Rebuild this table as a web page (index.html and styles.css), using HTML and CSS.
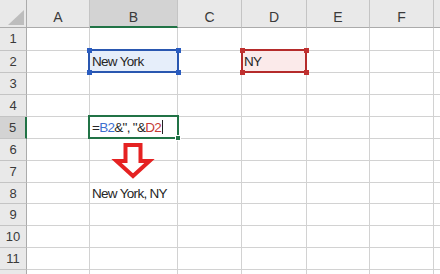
FILE: index.html
```html
<!DOCTYPE html>
<html>
<head>
<meta charset="utf-8">
<link rel="stylesheet" href="styles.css">
</head>
<body>
<div class="sheet">
  <div class="grid">
    <div class="corner"><span class="tri"></span></div>
    <div class="colhead">A</div>
    <div class="colhead active-col">B</div>
    <div class="colhead">C</div>
    <div class="colhead">D</div>
    <div class="colhead">E</div>
    <div class="colhead">F</div>
    <div class="colhead"></div>

    <div class="rowhead">1</div><div class="cell"></div><div class="cell"></div><div class="cell"></div><div class="cell"></div><div class="cell"></div><div class="cell"></div><div class="cell"></div>
    <div class="rowhead">2</div><div class="cell"></div><div class="cell fill-blue">New York</div><div class="cell"></div><div class="cell fill-red">NY</div><div class="cell"></div><div class="cell"></div><div class="cell"></div>
    <div class="rowhead">3</div><div class="cell"></div><div class="cell"></div><div class="cell"></div><div class="cell"></div><div class="cell"></div><div class="cell"></div><div class="cell"></div>
    <div class="rowhead">4</div><div class="cell"></div><div class="cell"></div><div class="cell"></div><div class="cell"></div><div class="cell"></div><div class="cell"></div><div class="cell"></div>
    <div class="rowhead active-row">5</div><div class="cell"></div><div class="cell formula">=<span class="ref-blue">B2</span>&amp;", "&amp;<span class="ref-red">D2</span><span class="caret"></span></div><div class="cell"></div><div class="cell"></div><div class="cell"></div><div class="cell"></div><div class="cell"></div>
    <div class="rowhead">6</div><div class="cell"></div><div class="cell"></div><div class="cell"></div><div class="cell"></div><div class="cell"></div><div class="cell"></div><div class="cell"></div>
    <div class="rowhead">7</div><div class="cell"></div><div class="cell"></div><div class="cell"></div><div class="cell"></div><div class="cell"></div><div class="cell"></div><div class="cell"></div>
    <div class="rowhead">8</div><div class="cell"></div><div class="cell">New York, NY</div><div class="cell"></div><div class="cell"></div><div class="cell"></div><div class="cell"></div><div class="cell"></div>
    <div class="rowhead">9</div><div class="cell"></div><div class="cell"></div><div class="cell"></div><div class="cell"></div><div class="cell"></div><div class="cell"></div><div class="cell"></div>
    <div class="rowhead">10</div><div class="cell"></div><div class="cell"></div><div class="cell"></div><div class="cell"></div><div class="cell"></div><div class="cell"></div><div class="cell"></div>
    <div class="rowhead">11</div><div class="cell"></div><div class="cell"></div><div class="cell"></div><div class="cell"></div><div class="cell"></div><div class="cell"></div><div class="cell"></div>
    <div class="rowhead"></div><div class="cell"></div><div class="cell"></div><div class="cell"></div><div class="cell"></div><div class="cell"></div><div class="cell"></div><div class="cell"></div>
  </div>

  <div class="sel sel-blue">
    <i class="h tl"></i><i class="h tr"></i><i class="h bl"></i><i class="h br"></i>
  </div>
  <div class="sel sel-red">
    <i class="h tl"></i><i class="h tr"></i><i class="h bl"></i><i class="h br"></i>
  </div>
  <div class="sel sel-green">
    <i class="h br"></i>
  </div>

  <svg class="arrow" width="440" height="274" viewBox="0 0 440 274">
    <path d="M125.5 145 H140.5 V161 H149.5 L133 176 L116.5 161 H125.5 Z" fill="#ffffff" stroke="#e52222" stroke-width="4" stroke-linejoin="miter"/>
  </svg>
</div>
</body>
</html>
```

FILE: styles.css
```css
html, body {
  margin: 0;
  padding: 0;
  background: #ffffff;
  overflow: hidden;
}

.sheet {
  position: relative;
  width: 440px;
  height: 274px;
  overflow: hidden;
  font-family: "Liberation Sans", Arial, sans-serif;
}

.grid {
  display: grid;
  grid-template-columns: 27px 63px 88px 64px 65px 63px 64px 20px;
  grid-template-rows: 28px 23px 22px 22px 22px 22px 22px 22px 21px 22px 22px 22px 22px;
}

.grid > div {
  box-sizing: border-box;
  border-right: 1px solid #d2d2d2;
  border-bottom: 1px solid #d2d2d2;
}

.corner {
  position: relative;
  background: #e9e9e9;
  border-right-color: #ababab !important;
  border-bottom-color: #ababab !important;
}

.tri {
  position: absolute;
  left: 8px;
  top: 10px;
  width: 0;
  height: 0;
  border-left: 16px solid transparent;
  border-bottom: 15px solid #bdbdbd;
}

.colhead {
  background: #e9e9e9;
  border-right-color: #c4c4c4 !important;
  border-bottom-color: #ababab !important;
  display: flex;
  align-items: flex-end;
  justify-content: center;
  padding-bottom: 3px;
  font-size: 14px;
  line-height: 1;
  color: #3a3a3a;
}

.colhead.active-col {
  background: #d3d3d3;
  border-bottom: 2px solid #217346 !important;
  padding-bottom: 2px;
}

.rowhead {
  background: #e9e9e9;
  border-right-color: #ababab !important;
  border-bottom-color: #c4c4c4 !important;
  text-align: center;
  font-size: 13px;
  line-height: 21px;
  color: #3a3a3a;
}

.rowhead.active-row {
  background: #d3d3d3;
  border-right: 2px solid #217346 !important;
}

.cell {
  font-size: 13.5px;
  letter-spacing: -0.7px;
  line-height: 21px;
  padding-left: 2px;
  color: #262626;
  white-space: nowrap;
  overflow: visible;
}

.fill-blue {
  background: #e6eefa;
}

.fill-red {
  background: #fbeaea;
}

.formula {
  position: relative;
}

.ref-blue {
  color: #3d6fcf;
}

.ref-red {
  color: #c53a35;
}

.caret {
  display: inline-block;
  width: 1px;
  height: 14px;
  background: #222222;
  vertical-align: -2px;
  margin-left: 1px;
}

.sel {
  position: absolute;
  box-sizing: border-box;
  border: 2px solid;
  pointer-events: none;
}

.sel-blue {
  left: 88px;
  top: 49px;
  width: 91px;
  height: 24px;
  border-color: #2a57b0;
}

.sel-red {
  left: 241px;
  top: 49px;
  width: 66px;
  height: 24px;
  border-color: #b52b2b;
}

.sel-green {
  left: 88px;
  top: 115px;
  width: 91px;
  height: 24px;
  border-color: #217346;
}

.h {
  position: absolute;
  width: 5px;
  height: 5px;
}

.sel-blue .h { background: #2a5cc0; }
.sel-red .h { background: #c0302f; }
.sel-green .h {
  background: #217346;
  border: 1px solid #ffffff;
  box-sizing: border-box;
  width: 6px;
  height: 6px;
}

.tl { left: -3.5px; top: -3.5px; }
.tr { right: -3.5px; top: -3.5px; }
.bl { left: -3.5px; bottom: -3.5px; }
.br { right: -3.5px; bottom: -3.5px; }

.arrow {
  position: absolute;
  left: 0;
  top: 0;
  pointer-events: none;
}
```
